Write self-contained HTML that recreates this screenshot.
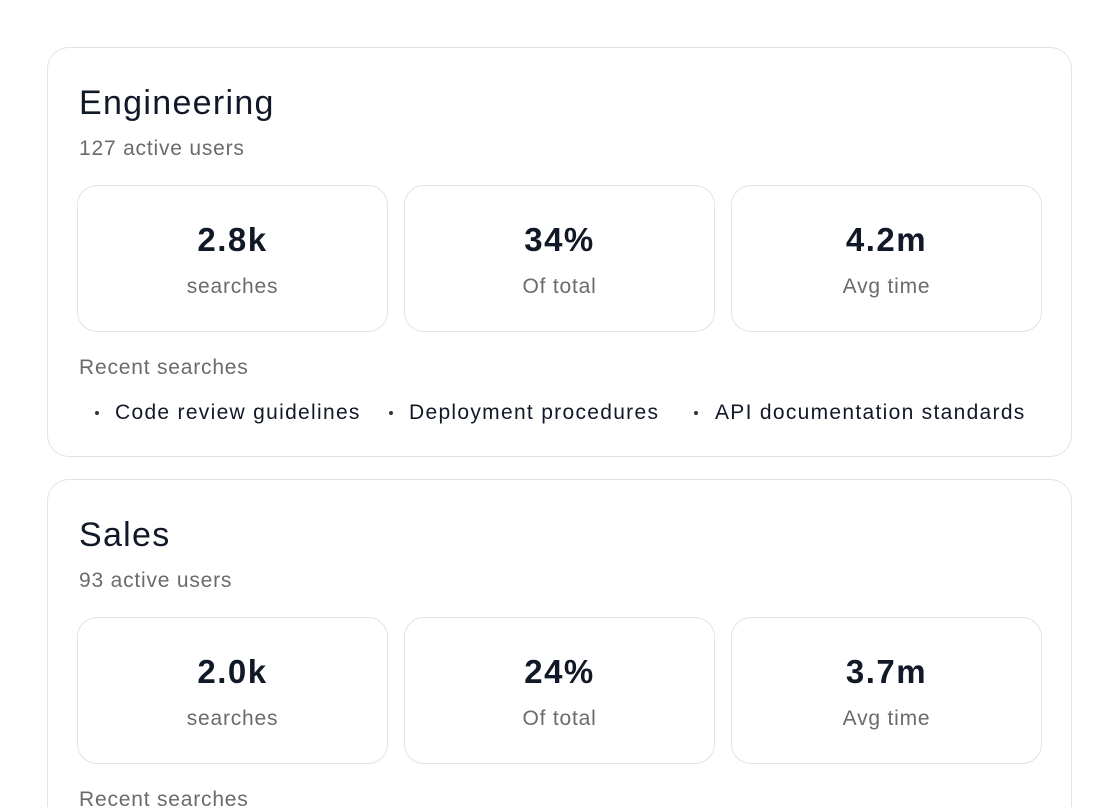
<!DOCTYPE html>
<html><head><meta charset="utf-8"><style>
*{margin:0;padding:0;box-sizing:border-box}
html,body{width:1119px;height:807px;overflow:hidden}
body{background:#fff;position:relative;font-family:"Liberation Sans",sans-serif}
.card{position:absolute;left:47px;width:1025px;height:410px;border:1px solid #e3e3e3;border-radius:22px}
.t{position:absolute;white-space:nowrap}
.h{left:31px;font-size:34px;line-height:34px;color:#111827;top:38px;letter-spacing:1.3px}
.s{left:31px;font-size:21px;line-height:21px;color:#6b6b6b;letter-spacing:0.8px}
.box{position:absolute;top:137px;width:311px;height:147px;border:1px solid #e3e3e3;border-radius:20px;text-align:center}
.v{position:absolute;left:0;right:0;top:37px;font-size:33px;line-height:33px;font-weight:bold;color:#111827;letter-spacing:1.5px}
.l{position:absolute;left:0;right:0;top:90px;font-size:21px;line-height:21px;color:#6b6b6b;letter-spacing:0.8px}
.b{font-size:21px;line-height:21px;color:#111827;top:354px;letter-spacing:1.3px}
.dot{position:absolute;top:363px;width:4px;height:4px;border-radius:50%;background:#333}
</style></head><body>
<div class="card" style="top:47px">
<div class="t h">Engineering</div>
<div class="t s" style="top:90px">127 active users</div>
<div class="box" style="left:29px"><div class="v">2.8k</div><div class="l">searches</div></div>
<div class="box" style="left:356px"><div class="v">34%</div><div class="l">Of total</div></div>
<div class="box" style="left:683px"><div class="v">4.2m</div><div class="l">Avg time</div></div>
<div class="t s" style="top:309px">Recent searches</div>
<div class="dot" style="left:47px"></div><div class="t b" style="left:67px">Code review guidelines</div>
<div class="dot" style="left:341px"></div><div class="t b" style="left:361px">Deployment procedures</div>
<div class="dot" style="left:646px"></div><div class="t b" style="left:667px">API documentation standards</div>
</div>
<div class="card" style="top:479px">
<div class="t h">Sales</div>
<div class="t s" style="top:90px">93 active users</div>
<div class="box" style="left:29px"><div class="v">2.0k</div><div class="l">searches</div></div>
<div class="box" style="left:356px"><div class="v">24%</div><div class="l">Of total</div></div>
<div class="box" style="left:683px"><div class="v">3.7m</div><div class="l">Avg time</div></div>
<div class="t s" style="top:309px">Recent searches</div>
</div>
</body></html>
